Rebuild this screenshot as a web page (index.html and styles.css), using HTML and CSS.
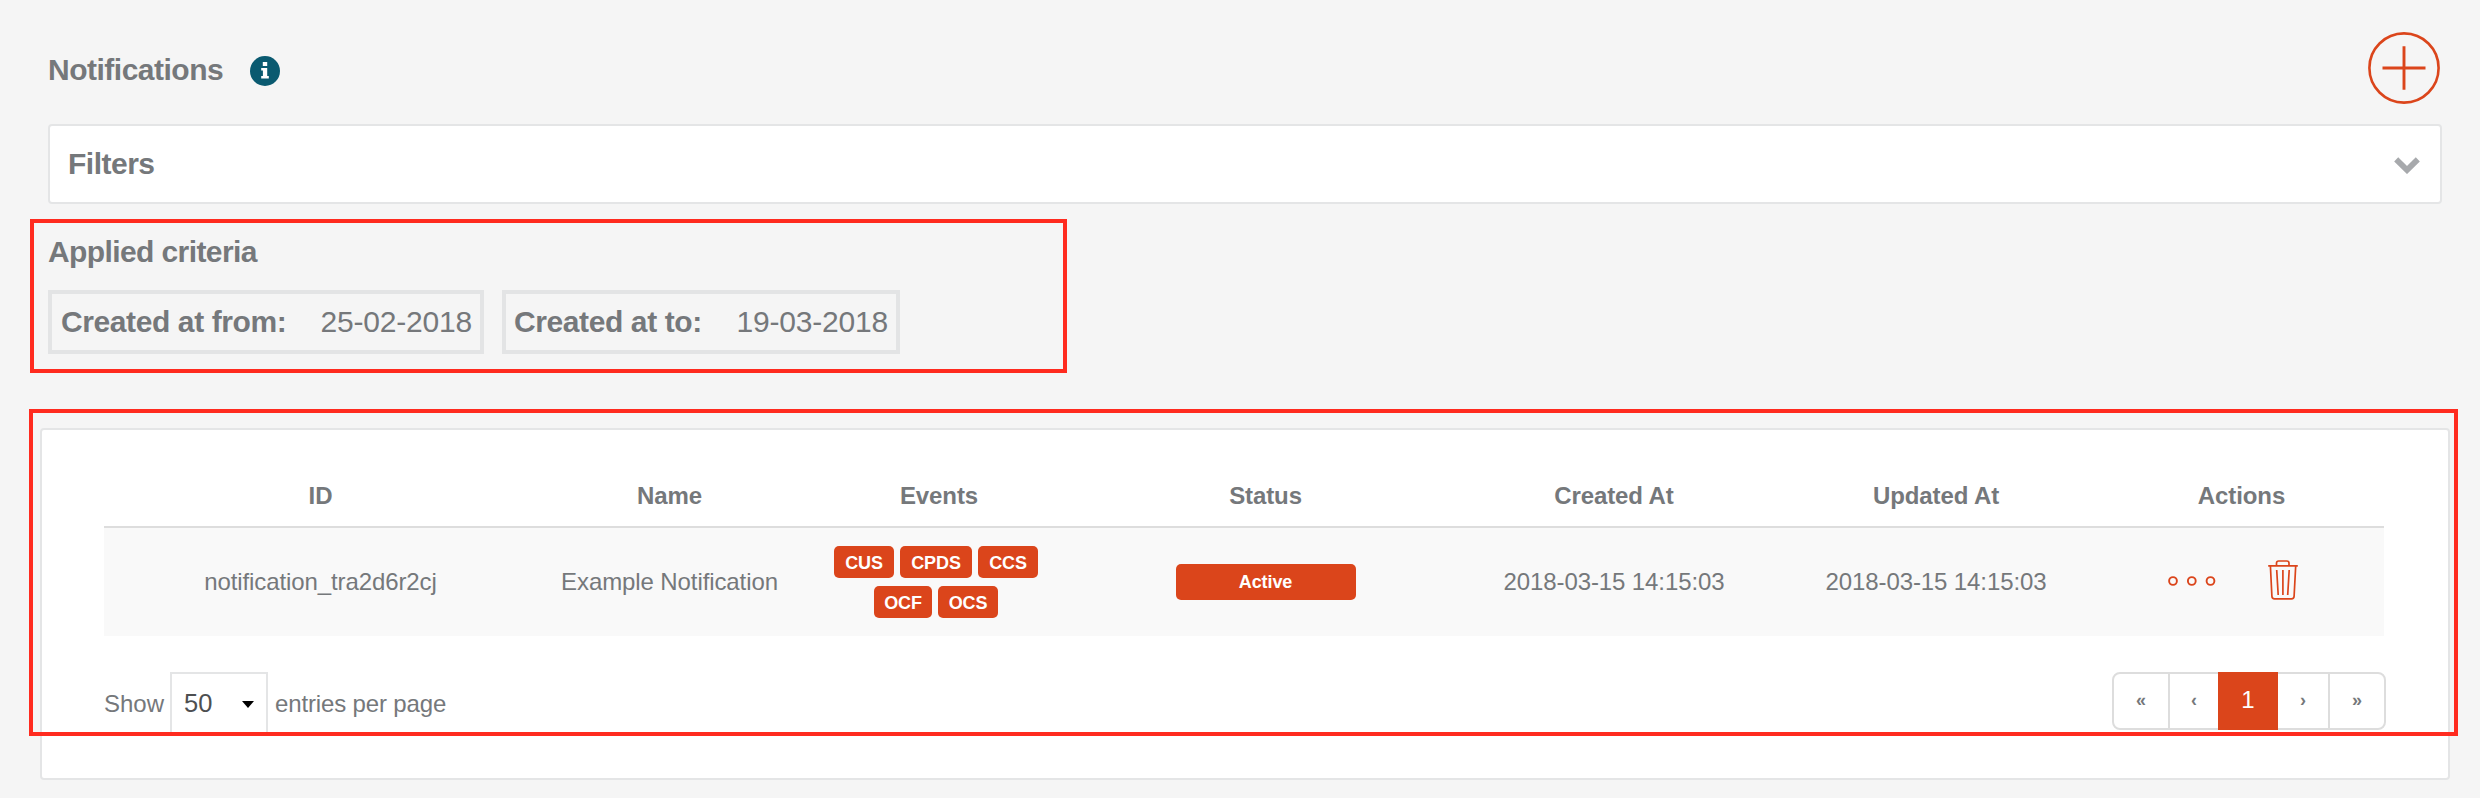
FILE: index.html
```html
<!DOCTYPE html>
<html lang="en">
<head>
<meta charset="utf-8">
<title>Notifications</title>
<link rel="stylesheet" href="styles.css">
</head>
<body>
<header class="page-header">
  <h1 class="heading">Notifications</h1>
  <svg class="info-icon" viewBox="0 0 30 30" aria-label="Info">
    <circle cx="15" cy="15" r="15" fill="#0a5a70"/>
    <path fill="#fff" d="M12.8 6h4.4v4h-4.4zM11.2 12h6v8h1.6v2.4h-7.6V20h1.7v-5.5h-1.7z"/>
  </svg>
  <svg class="add-icon" viewBox="0 0 72 72" aria-label="Add">
    <circle cx="36" cy="36" r="34.6" fill="none" stroke="#db451b" stroke-width="2.6"/>
    <path d="M36 14.3v43.4M14.5 36h43" fill="none" stroke="#db451b" stroke-width="2.9"/>
  </svg>
</header>
<section class="filters">
  <h2 class="heading">Filters</h2>
  <svg class="chevron" viewBox="0 0 26 17" aria-hidden="true">
    <path d="M2.2 2.4L13 13L23.8 2.4" fill="none" stroke="#a7a9ac" stroke-width="5.8" stroke-linejoin="miter"/>
  </svg>
</section>
<section class="criteria">
  <h2 class="heading">Applied criteria</h2>
  <div class="criteria-list">
    <div class="criterion criterion-from"><b>Created at from:</b><span>25-02-2018</span></div>
    <div class="criterion criterion-to"><b>Created at to:</b><span>19-03-2018</span></div>
  </div>
</section>
<main class="panel">
  <table class="grid">
    <colgroup>
      <col class="col-id"><col class="col-name"><col class="col-events"><col class="col-status"><col class="col-created"><col class="col-updated"><col class="col-actions">
    </colgroup>
    <thead>
      <tr><th>ID</th><th>Name</th><th>Events</th><th>Status</th><th>Created At</th><th>Updated At</th><th>Actions</th></tr>
    </thead>
    <tbody>
      <tr>
        <td>notification_tra2d6r2cj</td>
        <td>Example Notification</td>
        <td>
          <div class="events">
            <span class="tag">CUS</span><span class="tag tag-wide">CPDS</span><span class="tag">CCS</span>
            <span class="tag tag-narrow">OCF</span><span class="tag">OCS</span>
          </div>
        </td>
        <td><span class="status">Active</span></td>
        <td>2018-03-15 14:15:03</td>
        <td>2018-03-15 14:15:03</td>
        <td>
          <div class="actions">
            <svg class="dots" viewBox="0 0 48 10" aria-label="More">
              <g fill="none" stroke="#db451b" stroke-width="1.9"><circle cx="5" cy="5" r="3.9"/><circle cx="23.8" cy="5" r="3.9"/><circle cx="42.5" cy="5" r="3.9"/></g>
            </svg>
            <svg class="trash" viewBox="0 0 30 40" aria-label="Delete">
              <g fill="none" stroke="#db451b" stroke-width="1.7">
                <path d="M.2 5.8h29.6M8.5 6V3.2Q8.5 1 10.7 1h8.1Q21 1 21 3.2V6"/>
                <path d="M2.4 6l1.5 30.2Q4 38.8 6.5 38.8h17Q26 38.8 26.1 36.2L27.7 6M8.7 10l1.5 25M14.9 10v25M21.2 10l-1.5 25"/>
              </g>
            </svg>
          </div>
        </td>
      </tr>
    </tbody>
  </table>
  <footer class="table-footer">
    <div class="page-size">
      <span>Show</span>
      <div class="select">50<span class="caret"></span></div>
      <span class="entries">entries per page</span>
    </div>
    <nav class="pager">
      <a class="page first">«</a><a class="page prev">‹</a><a class="page current">1</a><a class="page next">›</a><a class="page last">»</a>
    </nav>
  </footer>
  <div class="table-outline"></div>
</main>
</body>
</html>
```
FILE: styles.css
```css
* { box-sizing: border-box; }
body {
  margin: 0;
  height: 798px;
  overflow: hidden;
  background: #f5f5f5;
  color: #75787b;
  font-family: "Liberation Sans", Arial, sans-serif;
  font-size: 24px;
}
svg { display: block; flex: none; }
.page-header {
  display: flex;
  align-items: center;
  height: 124px;
  padding: 16px 40px 0 48px;
}
.heading {
  margin: 0;
  font-size: 30px;
  line-height: 34px;
  letter-spacing: -0.5px;
  white-space: nowrap;
}
.page-header .heading { width: 202px; }
.info-icon { width: 30px; height: 30px; margin-top: 2px; }
.add-icon { width: 72px; height: 72px; margin: -5px 0 0 auto; }
.filters {
  display: flex;
  align-items: center;
  justify-content: space-between;
  height: 80px;
  margin: 0 38px 0 48px;
  padding: 0 20px 0 18px;
  background: #fff;
  border: 2px solid #e4e5e6;
  border-radius: 4px;
}
.chevron { width: 26px; height: 17px; margin-top: 3px; }
.criteria {
  width: 1037px;
  height: 154px;
  margin: 15px 0 0 30px;
  padding: 12px 14px;
  border: 4px solid #ff2b1f;
}
.criteria .heading { letter-spacing: -0.6px; }
.criteria-list { display: flex; gap: 18px; margin-top: 21px; }
.criterion {
  display: flex;
  align-items: center;
  justify-content: space-between;
  height: 64px;
  padding: 0 8px 0 9px;
  border: 4px solid #e3e4e5;
  font-size: 30px;
  white-space: nowrap;
}
.criterion b { letter-spacing: -0.4px; }
.criterion span { letter-spacing: -0.2px; }
.criterion-from { width: 436px; }
.criterion-to { width: 398px; padding-left: 8px; }
.panel {
  position: relative;
  height: 352px;
  margin: 55px 30px 0 40px;
  padding: 0 64px 0 62px;
  background: #fff;
  border: 2px solid #e4e5e6;
  border-radius: 4px;
}
.grid {
  width: 2280px;
  table-layout: fixed;
  border-collapse: separate;
  border-spacing: 0;
  text-align: center;
  white-space: nowrap;
}
.col-id { width: 433px; }
.col-name { width: 265px; }
.col-events { width: 274px; }
.col-status { width: 379px; }
.col-created { width: 318px; }
.col-updated { width: 326px; }
.col-actions { width: 285px; }
.grid th {
  height: 98px;
  padding: 36px 0 0;
  border-bottom: 2px solid #ddd;
  letter-spacing: -0.1px;
}
.grid td { height: 108px; padding: 0; background: #f9f9f9; letter-spacing: -0.1px; }
.events {
  display: flex;
  flex-wrap: wrap;
  justify-content: center;
  gap: 8px 6px;
  width: 210px;
  margin: 0 auto 0 29px;
}
.tag, .status {
  display: block;
  border-radius: 5px;
  background: #db451b;
  color: #fff;
  font-size: 18px;
  font-weight: bold;
}
.tag { width: 60px; height: 32px; line-height: 35px; }
.tag-wide { width: 72px; }
.tag-narrow { width: 58px; }
.status { width: 180px; height: 36px; margin: 0 auto; line-height: 36px; }
.actions { display: flex; align-items: center; padding-left: 69px; }
.dots { width: 48px; height: 10px; margin-top: -3px; }
.trash { width: 30px; height: 40px; margin: -4px 0 0 52px; }
.table-footer {
  display: flex;
  justify-content: space-between;
  margin: 36px -2px 0 0;
}
.page-size { display: flex; align-items: center; height: 62px; gap: 6px; }
.page-size > span { padding-top: 2px; }
.entries { letter-spacing: -0.15px; margin-left: 1px; }
.select {
  display: flex;
  align-items: center;
  justify-content: space-between;
  width: 98px;
  height: 62px;
  padding: 0 12px 0 12px;
  border: 2px solid #e4e5e6;
  color: #4d4f51;
  font-size: 25.5px;
}
.caret {
  margin-top: 2px;
  border: 6.5px solid transparent;
  border-top: 7px solid #000;
  border-bottom: 0;
}
.pager {
  display: flex;
  height: 58px;
  border: 2px solid #ddd;
  border-radius: 8px;
}
.page { text-align: center; line-height: 52px; }
.first { width: 56px; border-right: 2px solid #ddd; }
.prev { width: 48px; }
.current {
  width: 60px;
  margin: -2px 0;
  background: #db451b;
  color: #fff;
  line-height: 56px;
}
.next { width: 52px; border-right: 2px solid #ddd; }
.last { width: 54px; }
.first, .prev, .next, .last { font-size: 18px; font-weight: bold; }
.table-outline {
  position: absolute;
  top: -21px;
  left: -13px;
  width: 2429px;
  height: 327px;
  border: 4px solid #ff2b1f;
}
```
